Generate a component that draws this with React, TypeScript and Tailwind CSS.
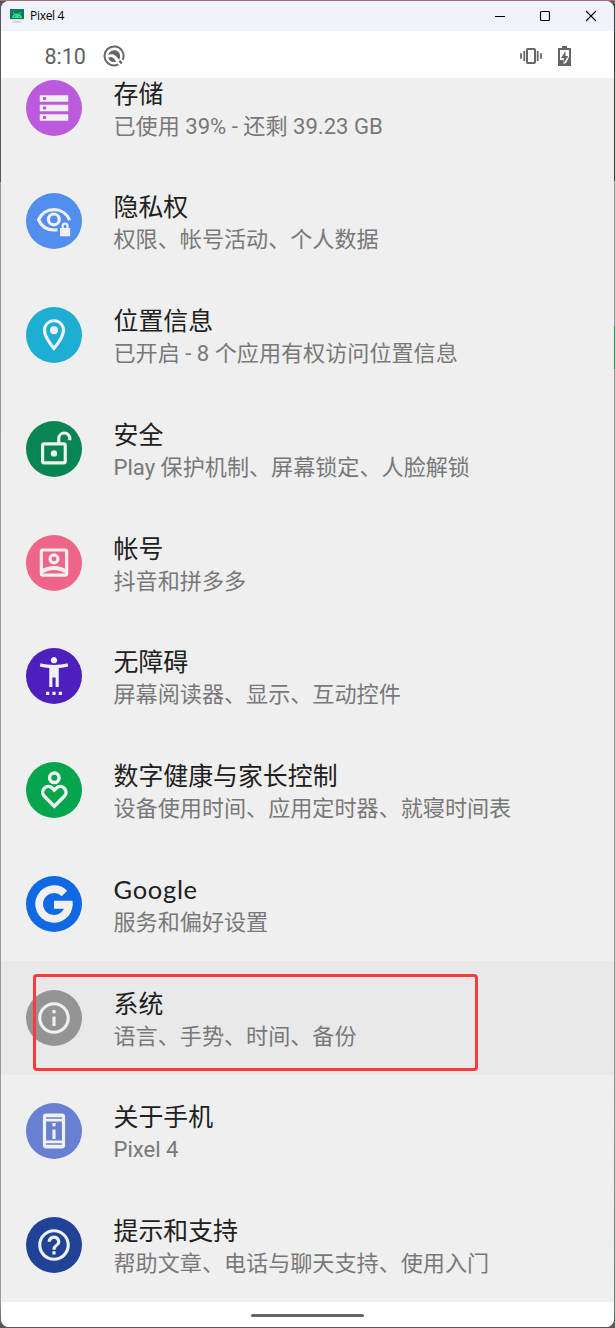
import type { ReactNode } from "react";
import clsx from "clsx";

type SettingItem = {
    title: string;
    summary: string;
    color: string;
    icon: ReactNode;
    latin?: boolean;
    selected?: boolean;
}

const items: SettingItem[] = [
    {
        title: "存储",
        summary: "已使用 39% - 还剩 39.23 GB",
        color: "bg-[#bb5adc]",
        icon: <path fillRule="evenodd" d="M3 4h18v4H3zM5 5v2h2V5zM3 10h18v4H3zM5 11v2h2v-2zM3 16h18v4H3zM5 17v2h2v-2z" />,
    },
    {
        title: "隐私权",
        summary: "权限、帐号活动、个人数据",
        color: "bg-[#528eed]",
        icon: (
            <>
                <g fill="none" stroke="currentColor" strokeWidth="2">
                    <path d="M21.9 11.4C20.2 7.4 16.4 4.8 12 4.8S3.9 7.4 2.2 11.2C4 15.2 7.7 17.7 12 17.7c.8 0 1.5-.1 2.2-.2" />
                    <circle cx="11.9" cy="11" r="3.4" />
                </g>
                <path fillRule="evenodd" d="M15.8 16.4h1v-1.3a2.2 2.2 0 0 1 4.4 0v1.3h1v5.2h-6.4zM18.2 16.4h1.6v-1.3a.8.8 0 0 0-1.6 0z" />
            </>
        ),
    },
    {
        title: "位置信息",
        summary: "已开启 - 8 个应用有权访问位置信息",
        color: "bg-[#1eaed3]",
        icon: (
            <>
                <path d="M12 2C8.13 2 5 5.13 5 9c0 5.25 7 13 7 13s7-7.75 7-13c0-3.87-3.13-7-7-7zM7 9c0-2.76 2.24-5 5-5s5 2.24 5 5c0 2.88-2.88 7.19-5 9.88C9.92 16.21 7 11.85 7 9z" />
                <circle cx="12" cy="9" r="2.5" />
            </>
        ),
    },
    {
        title: "安全",
        summary: "Play 保护机制、屏幕锁定、人脸解锁",
        color: "bg-[#088552]",
        icon: (
            <>
                <g fill="none" stroke="currentColor" strokeWidth="2">
                    <rect x="4.8" y="8.8" width="14.3" height="12" rx="1" />
                    <path d="M15 8.8V5.4a3.5 3.5 0 0 1 7 0v1" />
                </g>
                <circle cx="12" cy="14.8" r="2" />
            </>
        ),
    },
    {
        title: "帐号",
        summary: "抖音和拼多多",
        color: "bg-[#ef6587]",
        icon: (
            <>
                <g fill="none" stroke="currentColor" strokeWidth="2">
                    <rect x="4" y="3.8" width="16" height="15.9" rx="1" />
                    <circle cx="12" cy="9.4" r="2.5" />
                </g>
                <path d="M4 16.2c2.3-1.5 5-2.3 8-2.3s5.7.8 8 2.3v2H18.3c-1.9-1.3-4-1.8-6.3-1.8s-4.4.5-6.3 1.8H4z" />
            </>
        ),
    },
    {
        title: "无障碍",
        summary: "屏幕阅读器、显示、互动控件",
        color: "bg-[#4d1fbd]",
        icon: <path d="M20.5 4c-2.61.7-5.67 1-8.5 1s-5.89-.3-8.5-1L3 6c1.86.5 4 .83 6 1v12h2v-6h2v6h2V7c2-.17 4.14-.5 6-1l-.5-2zM12 4c1.1 0 2-.9 2-2s-.9-2-2-2-2 .9-2 2 .9 2 2 2zM7 24h2v-2H7v2zm4 0h2v-2h-2v2zm4 0h2v-2h-2v2z" />,
    },
    {
        title: "数字健康与家长控制",
        summary: "设备使用时间、应用定时器、就寝时间表",
        color: "bg-[#05a54d]",
        icon: (
            <g fill="none" stroke="currentColor" strokeWidth="2.2">
                <circle cx="12.2" cy="4.3" r="3" />
                <path d="M12.2 22.3l-6.3-6.3a3.6 3.6 0 0 1 5.1-5.1l1.2 1.2 1.2-1.2a3.6 3.6 0 0 1 5.1 5.1z" />
            </g>
        ),
    },
    {
        title: "Google",
        summary: "服务和偏好设置",
        color: "bg-[#1069e2]",
        latin: true,
        icon: (
            <>
                <path d="M18.6 5.4A9.35 9.35 0 1 0 21.35 12" fill="none" stroke="currentColor" strokeWidth="4.9" />
                <path d="M12 10h11.7l.1 2-1 3H12z" />
            </>
        ),
    },
    {
        title: "系统",
        summary: "语言、手势、时间、备份",
        color: "bg-[#949494]",
        selected: true,
        icon: <path d="M11 7h2v2h-2V7zm0 4h2v6h-2v-6zm1-9C6.48 2 2 6.48 2 12s4.48 10 10 10 10-4.48 10-10S17.52 2 12 2zm0 18c-4.41 0-8-3.59-8-8s3.59-8 8-8 8 3.59 8 8-3.59 8-8 8z" />,
    },
    {
        title: "关于手机",
        summary: "Pixel 4",
        color: "bg-[#6780d1]",
        icon: (
            <>
                <path fillRule="evenodd" d="M7 1h10a2 2 0 0 1 2 2v18a2 2 0 0 1-2 2H7a2 2 0 0 1-2-2V3a2 2 0 0 1 2-2zM7 3.3v.9h10v-.9zM7 6v12h10V6zM7 19.8v.9h10v-.9z" />
                <path d="M11 7h2v2h-2zM11 11h2v6h-2z" />
            </>
        ),
    },
    {
        title: "提示和支持",
        summary: "帮助文章、电话与聊天支持、使用入门",
        color: "bg-[#204397]",
        icon: <path d="M11 18h2v-2h-2v2zm1-16C6.48 2 2 6.48 2 12s4.48 10 10 10 10-4.48 10-10S17.52 2 12 2zm0 18c-4.41 0-8-3.59-8-8s3.59-8 8-8 8 3.59 8 8-3.59 8-8 8zm0-14c-2.21 0-4 1.79-4 4h2c0-1.1.9-2 2-2s2 .9 2 2c0 2-3 1.75-3 5h2c0-2.25 3-2.5 3-5 0-2.21-1.79-4-4-4z" />,
    },
];

const TitleBar = () => (
    <header className="flex h-[30px] shrink-0 items-center bg-[#f0f3fa] pl-[9px] text-black">
        <svg className="h-[14px] w-[14px]" viewBox="0 0 14 14">
            <path fill="#0b7a64" d="M0 0h14v10H0z" />
            <path fill="#3ddc84" d="M2 9a5 4.5 0 0 1 10 0z" />
            <path stroke="#3ddc84" strokeWidth=".9" d="M3.2 3l1.5 2.2M10.8 3L9.3 5.2" />
            <path fill="#0b7a64" d="M4.3 6.7h1v1h-1zM8.7 6.7h1v1h-1z" />
            <path fill="#dfe2e2" d="M0 10h14v1.6H0z" />
            <path fill="#c3c6c6" d="M3 12.2h8v1.3H3z" />
        </svg>
        <span className="ml-[6px] font-['Open_Sans','Noto_Sans',sans-serif] text-[12px] leading-4 tracking-[-0.3px]">Pixel 4</span>
        <svg className="ml-auto mr-[16px] h-3 w-[104px]" viewBox="0 0 104 12" fill="none" stroke="currentColor" strokeWidth="1.1">
            <path d="M1 6.5h10" />
            <rect x="46.5" y="1.5" width="9" height="9" rx="1" />
            <path d="M92 1l10 10M102 1L92 11" />
        </svg>
    </header>
);

const StatusBar = () => (
    <div className="flex h-[47px] shrink-0 items-center bg-white pl-[43.5px] pr-[43.5px] pt-[3px] text-[#666]">
        <span className="pt-px font-[Roboto,sans-serif] text-[21.5px] leading-7 text-[#5f5f5f]">8:10</span>
        <svg className="ml-[17.5px] h-[22px] w-[22px]" viewBox="0 0 22 22" fill="none" stroke="currentColor">
            <path strokeWidth="2" d="M15.2 19.5A9.5 9.5 0 1 1 19.7 14.9" />
            <path strokeWidth="2.2" d="M16.4 15.8l2.4 2.6" />
            <path fill="currentColor" stroke="none" d="M5.2 9.8C6.4 6.8 8.6 5.200 11.300 5.200c3.400 0 5.800 2.500 5.800 6 0 1.400-.3 2.600-.9 3.600L12.600 10.800C10.800 9 8.400 8.700 5.200 9.800z" />
            <path fill="currentColor" stroke="none" d="M5.200 12.800c2.300-1.300 4-.9 5.300.5l2.800 3.200c-3.700 1.500-7-.1-8.100-3.700z" />
        </svg>
        <svg className="ml-auto h-[18px] w-[22px]" viewBox="0 0 22 18" fill="none" stroke="currentColor">
            <rect x="7" y="1.9" width="8" height="14.2" rx="1" strokeWidth="2" />
            <path strokeWidth="1.8" d="M4.3 4v10M17.7 4v10M1 6.2v5.6M21 6.2v5.6" />
        </svg>
        <svg className="ml-[16px] h-5 w-[13px]" viewBox="0 0 13 20">
            <path fill="currentColor" d="M4 0h5v2h4v18H0V2h4z" />
            <path fill="#fff" d="M2 4h9v7l-3 6-2.500 1V14H2z" />
            <path fill="currentColor" d="M7.500 5v5h2.800L5.800 17v-5H3z" />
        </svg>
    </div>
);

const SettingRow = ({ item }: { item: SettingItem }) => (
    <li className={clsx("relative flex h-[113.75px] shrink-0 items-center pl-[25px]", item.selected && "bg-[#e9e9e9]")}>
        <div className={clsx("flex h-[56px] w-[56px] shrink-0 items-center justify-center rounded-full text-[#f0f0f0]", item.color)}>
            <svg className="h-[38px] w-[38px] overflow-visible" viewBox="0 0 24 24" fill="currentColor">{item.icon}</svg>
        </div>
        <div className="ml-[31.5px] whitespace-nowrap pt-[4px]">
            <h2
                className={clsx(
                    "text-[#202020]",
                    item.latin ? "mb-[3px] font-[Lato,sans-serif] text-[25.5px] leading-[30px] tracking-[0.7px]" : "-mb-px text-[24.9px] leading-[34px]"
                )}
            >
                {item.title}
            </h2>
            <p className="mb-px text-[22.1px] leading-[30px] text-[#787878]">{item.summary}</p>
        </div>
        {item.selected && (
            <div className="absolute left-[32px] top-[13px] h-[97px] w-[445px] rounded-[4px] border-3 border-[#fb3b3b]"></div>
        )}
    </li>
);

const App = () => {
    return (
        <div className="flex h-[1328px] w-[615px] bg-[linear-gradient(#a76f77_3px,#3b3b3f_3px,#3b3b3f_181px,#98999a_181px,#98999a_326px,#2b8d5a_326px,#2b8d5a_369px,#96999a_369px,#96999a_1050px,#6f7878_1310px,#555)] py-px pr-px">
            <div lang="zh-CN" className="flex flex-1 bg-[linear-gradient(#55555a_181px,#98959a_181px,#96999a_1300px,#555)] pl-px">
                <div className="flex flex-1 flex-col overflow-hidden rounded-lg bg-[#efefef] font-[Roboto,'Noto_Sans_CJK_SC',sans-serif]">
                    <TitleBar />
                    <StatusBar />
                    <div className="min-h-0 flex-1 overflow-hidden">
                        <ul className="-mt-[27.2px]">
                            {items.map((item) => (
                                <SettingRow key={item.title} item={item} />
                            ))}
                        </ul>
                    </div>
                    <div className="flex h-[25px] shrink-0 items-center justify-center bg-white pt-[2px]">
                        <div className="h-[3px] w-[113px] rounded-full bg-[#666]"></div>
                    </div>
                </div>
            </div>
        </div>
    );
}

export default App
